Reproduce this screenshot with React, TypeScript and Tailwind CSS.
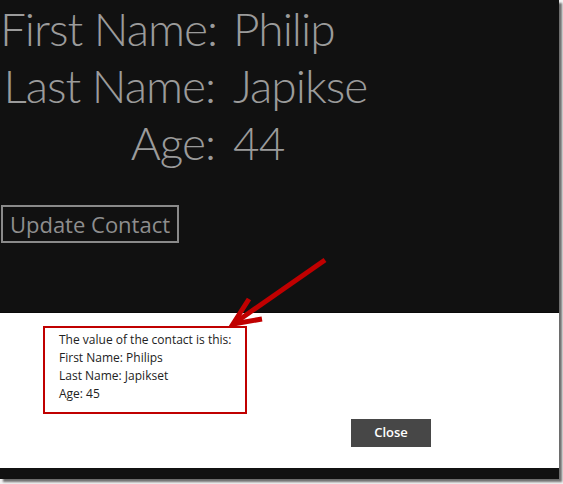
import React from "react";

const contact = [
  { label: "First Name:", value: "Philip" },
  { label: "Last Name:", value: "Japikse" },
  { label: "Age:", value: "44" },
];

export default function App() {
  return (
    <div className="relative w-[563px] h-[484px] bg-[#f2f2f2] overflow-hidden">
      <div className="flex flex-col w-[559px] h-[479px] bg-[#111111] shadow-[3px_3px_2px_rgba(0,0,0,0.55)]">
        {/* main page */}
        <div className="h-[313px] border-b border-[#0a0a0a] font-['Open_Sans',sans-serif] text-[#9b9b9b]">
          <div className="grid grid-cols-[215px_auto] gap-x-[18px] font-['Lato',sans-serif] text-[46px] leading-[57px] tracking-[-1px] font-light">
            {contact.map((row) => (
              <React.Fragment key={row.label}>
                <span className="text-right whitespace-nowrap">{row.label}</span>
                <span>{row.value}</span>
              </React.Fragment>
            ))}
          </div>
          <button className="mt-[34px] ml-[1px] w-[178px] h-[38px] border-2 border-[#8a8a8a] text-[22px] leading-none text-[#8e8e8e] font-normal">
            Update Contact
          </button>
        </div>

        {/* message dialog */}
        <div className="h-[155px] bg-white font-['Open_Sans',sans-serif]">
          <div className="ml-[43px] mt-[13px] w-[204px] h-[88px] border-2 border-[#c00000] pl-[14px] pt-[3px] text-[12px] leading-[18px] text-[#222]">
            <p>The value of the contact is this:</p>
            <p>First Name: Philips</p>
            <p>Last Name: Japikset</p>
            <p>Age: 45</p>
          </div>
          <button className="mt-[5px] ml-[351px] w-[80px] h-[28px] bg-[#474747] text-white text-[13px] font-semibold">
            Close
          </button>
        </div>

        <div className="flex-1" />
      </div>

      {/* annotation arrow */}
      <svg className="absolute left-0 top-0" width="563" height="484">
        <line x1="325" y1="260" x2="236" y2="322" stroke="#c00000" strokeWidth="5" />
        <polyline
          points="249,299 233,324 262,319"
          fill="none"
          stroke="#c00000"
          strokeWidth="5"
          strokeLinejoin="miter"
        />
      </svg>
    </div>
  );
}
